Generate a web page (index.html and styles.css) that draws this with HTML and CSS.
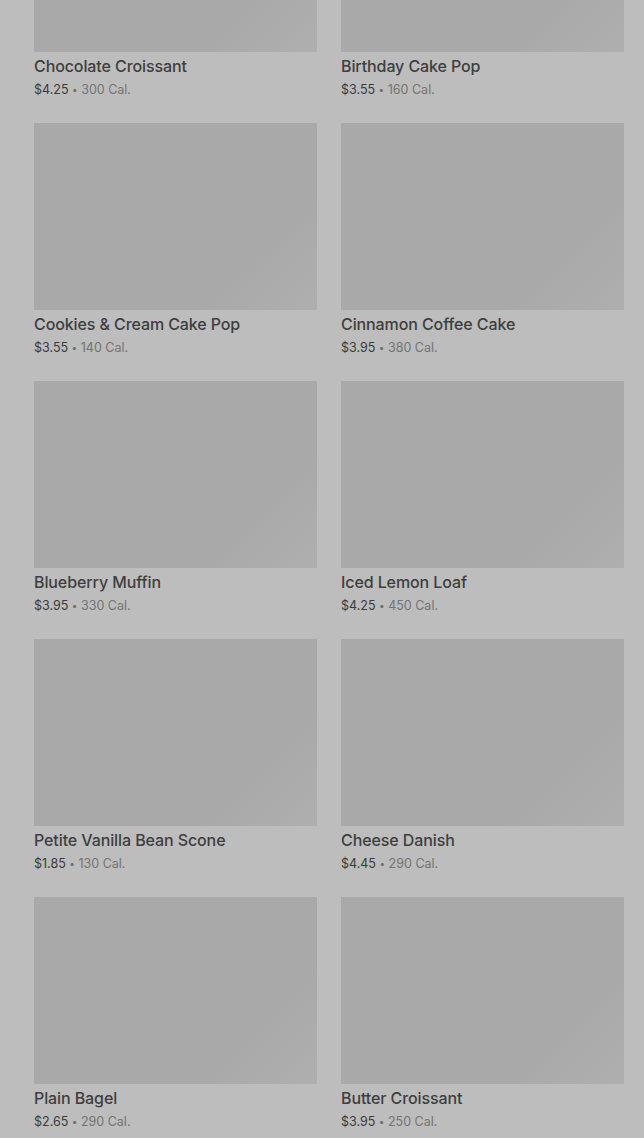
FILE: index.html
```html
<!DOCTYPE html>
<html lang="en">
<head>
    <meta charset="UTF-8">
    <meta name="viewport" content="width=device-width, initial-scale=1.0">
    <title>Bakery</title>
    <link rel="stylesheet" href="styles.css">
</head>
<body>
    <div class="menu-grid">
        <div class="product">
            <div class="product-image"></div>
            <div class="product-name">Chocolate Croissant</div>
            <div class="product-info">$4.25 <span class="dot">&bull;</span> <span class="cal">300 Cal.</span></div>
        </div>
        <div class="product">
            <div class="product-image"></div>
            <div class="product-name">Birthday Cake Pop</div>
            <div class="product-info">$3.55 <span class="dot">&bull;</span> <span class="cal">160 Cal.</span></div>
        </div>
        <div class="product">
            <div class="product-image"></div>
            <div class="product-name">Cookies &amp; Cream Cake Pop</div>
            <div class="product-info">$3.55 <span class="dot">&bull;</span> <span class="cal">140 Cal.</span></div>
        </div>
        <div class="product">
            <div class="product-image"></div>
            <div class="product-name">Cinnamon Coffee Cake</div>
            <div class="product-info">$3.95 <span class="dot">&bull;</span> <span class="cal">380 Cal.</span></div>
        </div>
        <div class="product">
            <div class="product-image"></div>
            <div class="product-name">Blueberry Muffin</div>
            <div class="product-info">$3.95 <span class="dot">&bull;</span> <span class="cal">330 Cal.</span></div>
        </div>
        <div class="product">
            <div class="product-image"></div>
            <div class="product-name">Iced Lemon Loaf</div>
            <div class="product-info">$4.25 <span class="dot">&bull;</span> <span class="cal">450 Cal.</span></div>
        </div>
        <div class="product">
            <div class="product-image"></div>
            <div class="product-name">Petite Vanilla Bean Scone</div>
            <div class="product-info">$1.85 <span class="dot">&bull;</span> <span class="cal">130 Cal.</span></div>
        </div>
        <div class="product">
            <div class="product-image"></div>
            <div class="product-name">Cheese Danish</div>
            <div class="product-info">$4.45 <span class="dot">&bull;</span> <span class="cal">290 Cal.</span></div>
        </div>
        <div class="product">
            <div class="product-image"></div>
            <div class="product-name">Plain Bagel</div>
            <div class="product-info">$2.65 <span class="dot">&bull;</span> <span class="cal">290 Cal.</span></div>
        </div>
        <div class="product">
            <div class="product-image"></div>
            <div class="product-name">Butter Croissant</div>
            <div class="product-info">$3.95 <span class="dot">&bull;</span> <span class="cal">250 Cal.</span></div>
        </div>
    </div>
</body>
</html>
```

FILE: styles.css
```css
body {
    margin: 0;
    padding: 0;
    background-color: #bdbdbd;
    font-family: Inter, Roboto, "Liberation Sans", Arial, sans-serif;
    overflow: hidden;
}
.menu-grid {
    display: grid;
    grid-template-columns: 283px 283px;
    column-gap: 24px;
    row-gap: 24px;
    margin-top: -135px;
    padding-left: 34px;
}
.product-image {
    height: 187px;
    background: linear-gradient(135deg, #a9a9a9 0%, #a9a9a9 75%, #afafaf 100%);
}
.product-name {
    margin-top: 4px;
    font-size: 16px;
    line-height: 20px;
    font-weight: 500;
    letter-spacing: -0.1px;
    color: #3e3e3e;
}
.product-info {
    margin-top: 4px;
    height: 19px;
    font-size: 12.5px;
    line-height: 20px;
    color: #3a3a3a;
}
.dot {
    font-size: 10px;
    line-height: 0;
    color: #6e6e6e;
    vertical-align: 1px;
}
.cal {
    color: #737373;
}
```
